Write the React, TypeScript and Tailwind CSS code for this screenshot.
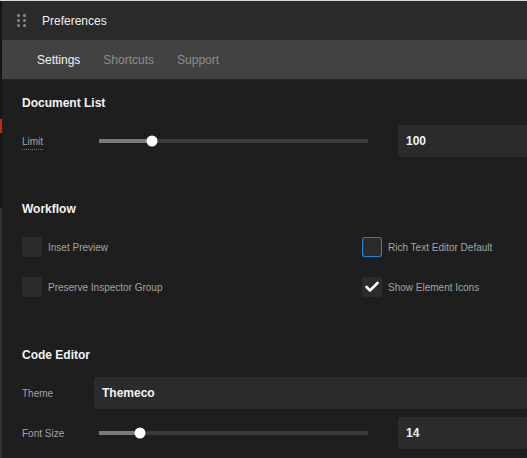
import type { ReactNode } from "react";

const font = "font-['Liberation_Sans',Arial,sans-serif]";

function Slider({ pct }: { pct: number }) {
  return (
    <div className="relative h-[4px] w-[269px] bg-[#3a3a3a]">
      <div className="h-full bg-[#7a7a7a]" style={{ width: `${pct}%` }} />
      <div
        className="absolute top-1/2 h-[11px] w-[11px] -translate-x-1/2 -translate-y-1/2 rounded-full bg-white"
        style={{ left: `${pct}%` }}
      />
    </div>
  );
}

function Field({ children, className = "" }: { children: ReactNode; className?: string }) {
  return (
    <div
      className={`flex h-[32px] items-center rounded-[3px] bg-[#2b2b2b] pl-[8px] text-[12px] font-bold text-[#f2f2f2] ${className}`}
    >
      {children}
    </div>
  );
}

function Check({ label, checked, focused }: { label: string; checked?: boolean; focused?: boolean }) {
  return (
    <label className="flex items-center gap-[6px]">
      <span
        className={`flex h-[20px] w-[20px] items-center justify-center rounded-[3px] bg-[#2b2b2b] ${
          focused ? "ring-1 ring-inset ring-[#1a86e0]" : ""
        }`}
      >
        {checked && (
          <svg width="20" height="20" viewBox="0 0 20 20">
            <polyline
              points="4.5,10 8,13.5 15.5,6"
              fill="none"
              stroke="white"
              strokeWidth="2.6"
              strokeLinecap="round"
              strokeLinejoin="round"
            />
          </svg>
        )}
      </span>
      <span className="text-[10px] text-[#a3a3a3]">{label}</span>
    </label>
  );
}

function Title({ children, className = "" }: { children: ReactNode; className?: string }) {
  return <h2 className={`text-[12px] font-bold leading-4 text-[#f4f4f4] ${className}`}>{children}</h2>;
}

export default function App() {
  return (
    <div className={`flex h-[458px] w-[527px] overflow-hidden bg-[#d8d8d8] pt-[1px] ${font}`}>
      <div className="flex w-[2px] shrink-0 flex-col">
        <div className="h-[118px] bg-[#151515]" />
        <div className="h-[14px] bg-[#c0281c]" />
        <div className="h-[75px] bg-[#151515]" />
        <div className="flex-1 bg-[#343434]" />
      </div>
      <div className="flex w-[600px] shrink-0 flex-col bg-[#1e1e1e]">
        <header className="flex h-[39px] items-center gap-[16px] bg-[#2a2a2a] pl-[15px]">
          <div className="grid grid-cols-2 gap-x-[3px] gap-y-[2px]">
            {Array.from({ length: 6 }).map((_, i) => (
              <span key={i} className="h-[3px] w-[3px] rounded-full bg-[#8c8c8c]" />
            ))}
          </div>
          <span className="text-[12px] text-[#f0f0f0]">Preferences</span>
        </header>
        <nav className="flex h-[40px] items-center gap-[23px] border-b border-[#262626] bg-[#424242] pl-[35px] text-[12px]">
          <span className="text-[#f2f2f2]">Settings</span>
          <span className="text-[#8e8e8e]">Shortcuts</span>
          <span className="text-[#8e8e8e]">Support</span>
        </nav>

        <main className="pl-[20px] pt-[15px]">
          <Title>Document List</Title>
          <div className="mt-[14px] flex h-[32px] items-center">
            <span className="w-[77px] text-[10px] text-[#a3a3a3]">
              <span className="border-b border-dotted border-[#777] pb-[2px]">Limit</span>
            </span>
            <Slider pct={19.7} />
            <Field className="ml-[30px] flex-1">100</Field>
          </div>

          <Title className="mt-[44px]">Workflow</Title>
          <div className="mt-[20px] grid w-[500px] grid-cols-[340px_1fr] gap-y-[20px]">
            <Check label="Inset Preview" />
            <Check label="Rich Text Editor Default" focused />
            <Check label="Preserve Inspector Group" />
            <Check label="Show Element Icons" checked />
          </div>

          <Title className="mt-[50px]">Code Editor</Title>
          <div className="mt-[14px] flex h-[32px] items-center">
            <span className="w-[72px] text-[10px] text-[#a3a3a3]">Theme</span>
            <Field className="flex-1">Themeco</Field>
          </div>
          <div className="mt-[8px] flex h-[32px] items-center">
            <span className="w-[77px] text-[10px] text-[#a3a3a3]">Font Size</span>
            <Slider pct={15.2} />
            <Field className="ml-[30px] flex-1">14</Field>
          </div>
        </main>
      </div>
    </div>
  );
}
